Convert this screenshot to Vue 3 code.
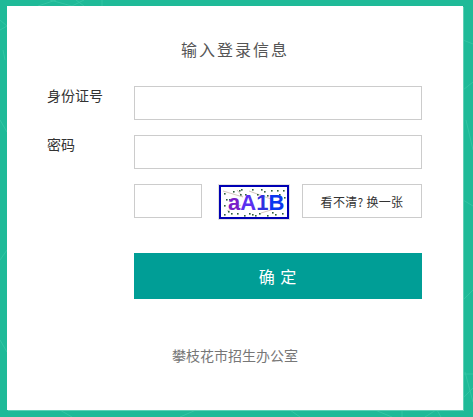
<template>
  <main class="page">
    <!-- background pattern -->
    <svg class="pattern" width="473" height="417" viewBox="0 0 473 417" fill="none" stroke="#3ccaa9" stroke-width="1" opacity="0.7">
      <path d="M38 6 L56 0 M50 0 L72 6 M72 6 L84 0 M76 0 L84 6 M102 0 V6" />
      <path d="M0 20 L7 26 L0 30 M3 50 L5 60" />
      <path d="M463 40 L473 44 M463 90 L473 82 M466 120 L473 150 M463 200 L473 206 M463 300 L473 290" />
      <path d="M463 374 L473 374 M463 398 L473 388 M465 372 L473 402" />
      <path d="M375 410 L392 417 M402 410 V417 M425 417 L436 410 M437 410 L441 417" />
      <path d="M60 410 L72 417 M180 417 L196 410 M290 410 L300 417" />
      <path d="M0 120 L7 132 M0 260 L7 250 M0 340 L7 352" />
    </svg>

    <section class="box">
      <h1 class="title">输入登录信息</h1>

      <div class="row row--first">
        <label class="label">身份证号</label>
        <input class="input" type="text" />
      </div>

      <div class="row row--second">
        <label class="label">密码</label>
        <input class="input" type="password" />
      </div>

      <div class="row row--code">
        <input class="input input--code" type="text" />
        <div class="captcha">
          <svg width="70" height="34" viewBox="0 0 70 34">
            <rect x="1" y="1" width="68" height="32" fill="#fff" stroke="#0000b4" stroke-width="2" />
            <path d="M4 6 L24 12 L18 5 M30 6 L52 14 M8 26 L22 20 M42 28 L62 22" stroke="#d8c8c0" fill="none" />
            <rect v-for="(d, i) in dots" :key="i" :x="d[0]" :y="d[1]" width="1.6" height="1.6" fill="#2f5f3c" />
            <text x="9" y="25" class="captcha__text">
              <tspan fill="#7a1cc8">a</tspan><tspan fill="#5a30f0">A</tspan><tspan fill="#3030e0">1</tspan><tspan fill="#0a38f0">B</tspan>
            </text>
          </svg>
        </div>
        <button class="refresh" type="button">看不清? 换一张</button>
      </div>

      <div class="row row--submit">
        <button class="submit" type="button">确 定</button>
      </div>

      <p class="footer">攀枝花市招生办公室</p>
    </section>
  </main>
</template>

<script setup>
const dots = [
  [5, 8], [10, 14], [5, 20], [12, 28], [20, 5], [26, 9], [33, 4], [38, 9],
  [45, 6], [52, 5], [60, 9], [64, 5], [63, 28], [56, 29], [48, 30], [40, 28],
  [33, 29], [25, 30], [18, 28], [5, 29], [7, 14], [22, 4], [48, 10], [58, 5],
  [14, 6], [42, 4], [30, 28], [9, 26], [65, 12], [53, 27], [36, 30], [21, 9]
];
</script>

<style>
html,
body {
  margin: 0;
  background: #1fba98;
}
</style>

<style scoped>
.page {
  position: relative;
  box-sizing: border-box;
  width: 473px;
  height: 417px;
  padding: 6px 10px 7px 7px;
  background: #1fba98;
  overflow: hidden;
  font-family: "Noto Sans CJK SC", "Liberation Sans", sans-serif;
}

.pattern {
  position: absolute;
  left: 0;
  top: 0;
}

.box {
  position: relative;
  box-sizing: border-box;
  height: 404px;
  padding-left: 127px;
  background: #fff;
  box-shadow: 1px 1px 0 #5fd0b6;
}

.title {
  box-sizing: content-box;
  width: 456px;
  height: 24px;
  margin: 0 0 0 -127px;
  padding-top: 31px;
  font-size: 16px;
  line-height: 24px;
  font-weight: 400;
  letter-spacing: 2px;
  text-align: center;
  color: #555;
}

.row {
  position: relative;
  display: flex;
  align-items: flex-start;
  width: 288px;
}

.row--first {
  margin-top: 25px;
}

.row--second {
  margin-top: 15px;
}

.row--code {
  margin-top: 15px;
  height: 36px;
}

.row--submit {
  margin-top: 33px;
}

.label {
  position: absolute;
  left: -87px;
  top: -1px;
  font-size: 14px;
  line-height: 20px;
  color: #333;
}

.input {
  box-sizing: border-box;
  width: 288px;
  height: 34px;
  border: 1px solid #ccc;
  background: #fff;
  outline: none;
}

.input--code {
  width: 68px;
}

.captcha {
  box-sizing: border-box;
  width: 72px;
  height: 36px;
  margin-left: 16px;
  border: 1px solid #e2e2e2;
}

.captcha svg {
  display: block;
}

.captcha__text {
  font-family: "Liberation Sans", sans-serif;
  font-size: 22px;
  font-weight: 700;
}

.refresh {
  box-sizing: border-box;
  width: 120px;
  height: 34px;
  margin-left: 12px;
  padding: 0;
  border: 1px solid #ccc;
  background: #fff;
  font-family: inherit;
  font-size: 12px;
  letter-spacing: 0.3px;
  color: #333;
}

.submit {
  width: 288px;
  height: 46px;
  padding: 0;
  border: none;
  background: #009e96;
  color: #fff;
  font-family: inherit;
  font-size: 16px;
  letter-spacing: 1px;
}

.footer {
  width: 456px;
  margin: 45px 0 0 -127px;
  font-size: 14px;
  line-height: 22px;
  text-align: center;
  color: #777;
}
</style>
